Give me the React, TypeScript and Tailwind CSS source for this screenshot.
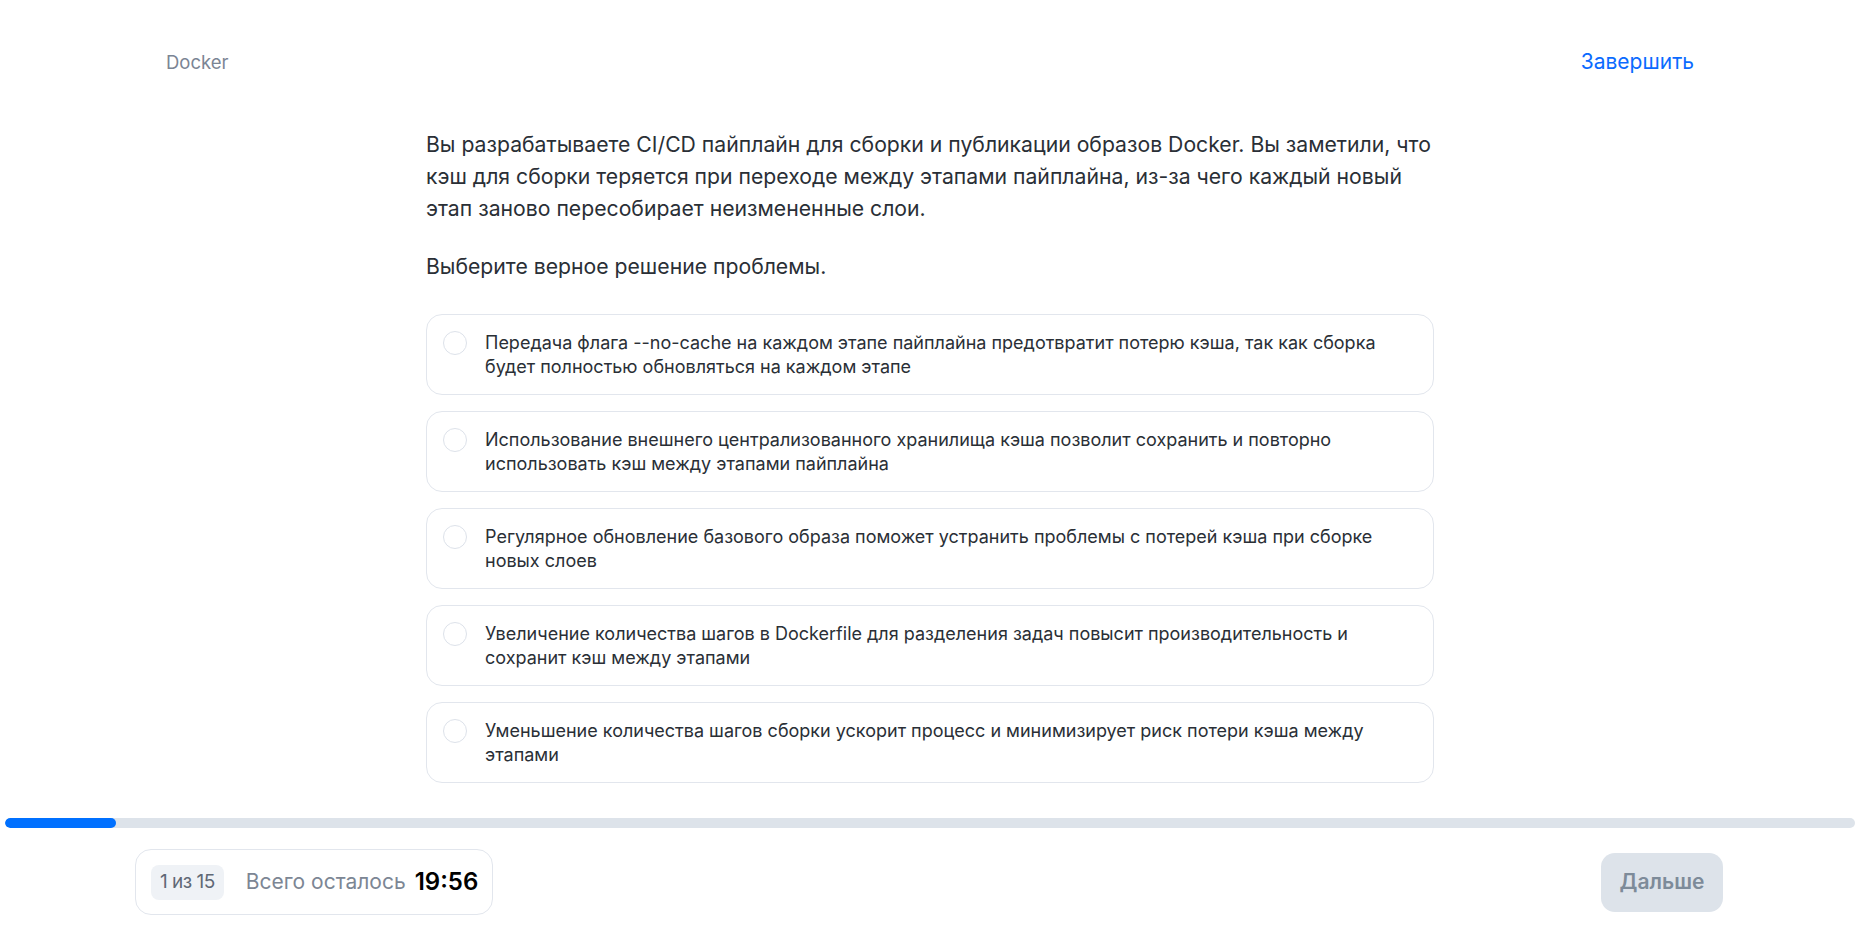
import React from "react";

const options = [
  "Передача флага --no-cache на каждом этапе пайплайна предотвратит потерю кэша, так как сборка будет полностью обновляться на каждом этапе",
  "Использование внешнего централизованного хранилища кэша позволит сохранить и повторно использовать кэш между этапами пайплайна",
  "Регулярное обновление базового образа поможет устранить проблемы с потерей кэша при сборке новых слоев",
  "Увеличение количества шагов в Dockerfile для разделения задач повысит производительность и сохранит кэш между этапами",
  "Уменьшение количества шагов сборки ускорит процесс и минимизирует риск потери кэша между этапами",
];

export default function App() {
  return (
    <div
      className="min-h-screen bg-white flex flex-col"
      style={{ fontFamily: "Inter, 'Noto Sans', sans-serif" }}
    >
      <header className="flex justify-between items-center px-[166px] pt-12">
        <span className="text-[18.5px] leading-7 text-[#7b8594]">Docker</span>
        <button className="text-[21px] leading-7 text-[#0b6bff]">Завершить</button>
      </header>

      <main className="w-[1008px] mx-auto pt-[52px]">
        <p className="text-[21.2px] leading-8 text-[#2a2f36]">
          Вы разрабатываете CI/CD пайплайн для сборки и публикации образов Docker. Вы заметили, что кэш для сборки
          теряется при переходе между этапами пайплайна, из-за чего каждый новый этап заново пересобирает неизмененные
          слои.
        </p>
        <p className="mt-[26px] text-[21.2px] leading-8 text-[#2a2f36]">Выберите верное решение проблемы.</p>

        <div className="mt-8 flex flex-col gap-4">
          {options.map((o) => (
            <label
              key={o}
              className="flex items-start gap-[18px] border border-[#e2e6ed] rounded-2xl pl-4 pr-6 pt-4 pb-[15px] cursor-pointer"
            >
              <span className="w-6 h-6 shrink-0 rounded-full border border-[#dde2ea] bg-white" />
              <span className="text-[18px] leading-6 text-[#2a2f36]">{o}</span>
            </label>
          ))}
        </div>
      </main>

      <div className="mt-[35px] px-[5px]">
        <div className="h-[10px] rounded-full bg-[#dde3ea] overflow-hidden">
          <div className="h-full w-[111px] rounded-full bg-[#0070ff]" />
        </div>
      </div>

      <footer className="flex items-center justify-between pl-[135px] pr-[137px] mt-[21px]">
        <div className="flex items-center h-[66px] border border-[#e2e6ed] rounded-2xl pl-[15px] pr-[14px]">
          <span className="h-[35px] px-[9px] flex items-center rounded-lg bg-[#eff2f6] text-[19px] text-[#5f6875] tracking-[-0.5px]">
            1 из 15
          </span>
          <span className="ml-[22px] text-[21px] text-[#7c8694]">Всего осталось</span>
          <span className="ml-[9px] text-[24px] font-semibold text-black">19:56</span>
        </div>
        <button className="h-[59px] w-[122px] rounded-[14px] bg-[#dde3ea] text-[21px] font-semibold text-[#7d8b99]">
          Дальше
        </button>
      </footer>
    </div>
  );
}
